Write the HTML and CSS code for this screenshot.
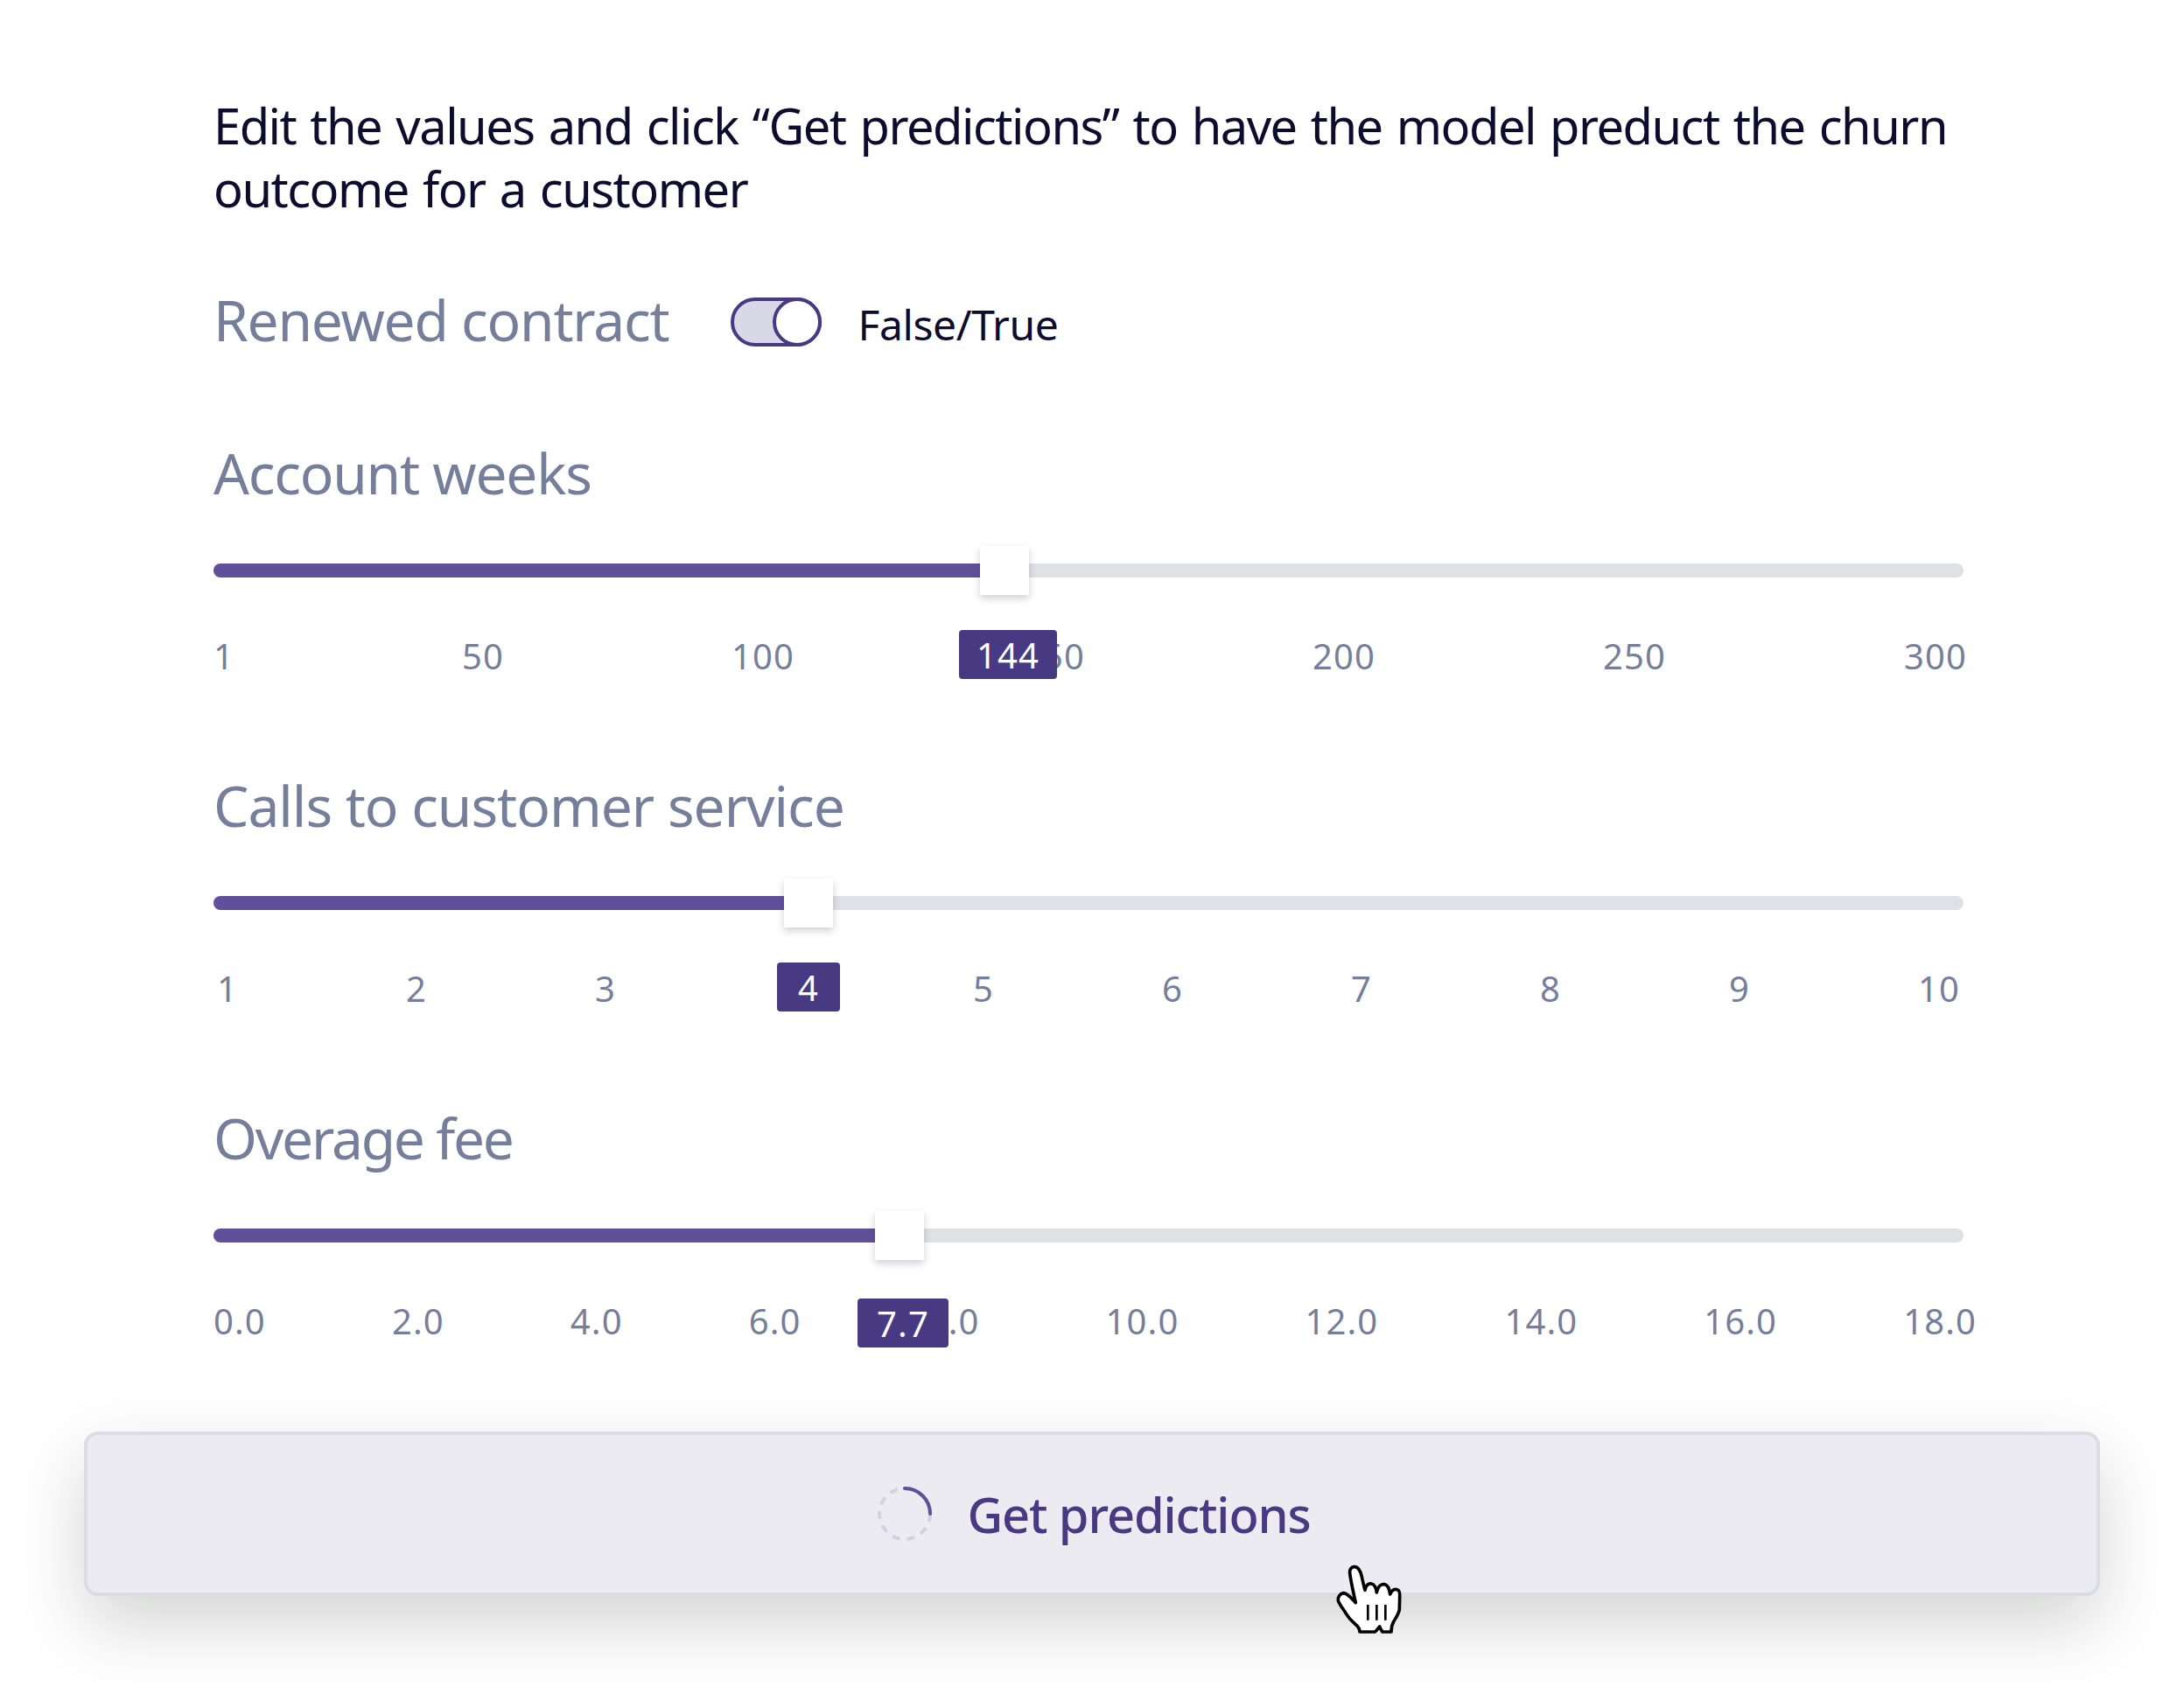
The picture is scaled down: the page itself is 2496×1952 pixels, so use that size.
FILE: index.html
```html
<!DOCTYPE html>
<html lang="en">
<head>
<meta charset="utf-8">
<title>Get predictions</title>
<link rel="stylesheet" href="styles.css">
</head>
<body>
<main class="page">
  <div class="form">
    <p class="intro">Edit the values and click “Get predictions” to have the model preduct the churn<br>outcome for a customer</p>

    <div class="toggle-field">
      <span class="label">Renewed contract</span>
      <span class="toggle"><span class="toggle-knob"></span></span>
      <span class="toggle-text">False/True</span>
    </div>

    <section class="field field-first">
      <h2 class="label">Account weeks</h2>
      <div class="slider">
        <div class="track"></div>
        <div class="fill" style="width:43.8%"></div>
        <div class="thumb" style="left:43.8%"></div>
      </div>
      <div class="ticks ticks-weeks">
        <span>1</span><span>50</span><span>100</span><span>150</span><span>200</span><span>250</span><span class="tick-last">300</span>
        <span class="badge badge-wide" style="left:852px">144</span>
      </div>
    </section>

    <section class="field">
      <h2 class="label label-loose">Calls to customer service</h2>
      <div class="slider">
        <div class="track"></div>
        <div class="fill" style="width:32.6%"></div>
        <div class="thumb" style="left:32.6%"></div>
      </div>
      <div class="ticks ticks-calls">
        <span>1</span><span>2</span><span>3</span><span>4</span><span>5</span><span>6</span><span>7</span><span>8</span><span>9</span><span>10</span>
        <span class="badge badge-narrow" style="left:644px">4</span>
      </div>
    </section>

    <section class="field">
      <h2 class="label label-tight">Overage fee</h2>
      <div class="slider">
        <div class="track"></div>
        <div class="fill" style="width:37.8%"></div>
        <div class="thumb" style="left:37.8%"></div>
      </div>
      <div class="ticks ticks-fee">
        <span>0.0</span><span>2.0</span><span>4.0</span><span>6.0</span><span>8.0</span><span>10.0</span><span>12.0</span><span>14.0</span><span>16.0</span><span>18.0</span>
        <span class="badge badge-fee" style="left:736px">7.7</span>
      </div>
    </section>
  </div>

  <button class="predict" type="button">
    <svg class="spinner" viewBox="0 0 62 62" aria-hidden="true">
      <circle class="spinner-ring" cx="31" cy="31" r="29"/>
      <path class="spinner-arc" d="M31 2A29 29 0 0 1 60 31"/>
    </svg>
    <span>Get predictions</span>
  </button>

  <svg class="cursor" viewBox="0 0 480 420" aria-hidden="true">
    <path class="cursor-hand" d="M208 215C200 180 192 145 188 115C186 98 196 90 206 92C218 94 224 106 228 122C232 140 236 158 240 172C242 156 252 148 262 150C272 152 278 164 280 180C284 160 294 150 306 152C318 154 324 170 326 186C332 172 342 168 350 170C358 172 360 182 359 195L358 238C356 254 346 266 338 280C331 292 330 302 330 315L300 315C296 310 292 302 290 297C284 304 280 311 274 315L222 315C222 304 216 296 206 288C194 278 184 268 176 254C168 240 154 224 148 208C146 196 154 184 166 182C180 182 196 202 208 215Z"/>
    <path class="cursor-lines" d="M250 222V275M280 222V275M310 222V275"/>
  </svg>
</main>
</body>
</html>
```
FILE: styles.css
```css
* { box-sizing: border-box; }

html, body { margin: 0; padding: 0; background: #fff; }

body {
  font-family: "Noto Sans", "Open Sans", sans-serif;
  color: #0c0c2e;
}

.page {
  position: relative;
  width: 2496px;
  height: 1952px;
  padding-top: 107px;
  overflow: hidden;
}

.form { padding-left: 244px; width: 2300px; }

.intro {
  margin: 0;
  font-size: 56px;
  line-height: 72px;
  white-space: nowrap;
  letter-spacing: -1.5px;
  word-spacing: 3px;
}

.label {
  margin: 0;
  font-size: 64px;
  font-weight: 400;
  line-height: 80px;
  color: #757f9b;
  letter-spacing: -1.2px;
}

.label-loose { letter-spacing: -1px; }
.label-tight { letter-spacing: -2.2px; }

.toggle-field {
  display: flex;
  align-items: center;
  margin-top: 75px;
  height: 80px;
}

.toggle {
  display: flex;
  justify-content: flex-end;
  width: 104px;
  height: 56px;
  margin: 4px 0 0 71px;
  border: 4px solid #483a82;
  border-radius: 28px;
  background: #d9d8e6;
}

.toggle-knob {
  width: 56px;
  height: 56px;
  margin: -4px -4px 0 0;
  border: 4px solid #483a82;
  border-radius: 50%;
  background: #fff;
}

.toggle-text {
  margin: 8px 0 0 41px;
  font-size: 48px;
  letter-spacing: -.4px;
}

.field { margin-top: 103px; }
.field-first { margin-top: 95px; }

.slider {
  position: relative;
  width: 2000px;
  height: 56px;
  margin-top: 43px;
}

.track, .fill {
  position: absolute;
  top: 20px;
  left: 0;
  height: 16px;
  border-radius: 8px;
}

.track { width: 100%; background: #dee1e5; }
.fill { background: #5f509a; border-radius: 8px 0 0 8px; }

.thumb {
  position: absolute;
  top: 0;
  width: 56px;
  height: 56px;
  background: #fff;
  box-shadow: 0 4px 8px rgba(40, 45, 70, .22);
}

.ticks {
  position: relative;
  display: flex;
  justify-content: space-between;
  height: 56px;
  margin-top: 42px;
  font-size: 40px;
  line-height: 56px;
  color: #757f9b;
  letter-spacing: 1.1px;
}

.ticks-weeks { width: 2004px; }
.tick-last { margin-left: 12px; }
.ticks-calls { width: 2000px; padding: 0 4px; }
.ticks-fee { width: 2015px; }

.badge {
  position: absolute;
  top: -2px;
  height: 56px;
  border-radius: 4px;
  background: #483a82;
  color: #fff;
  line-height: 58px;
  text-align: center;
}

.badge-narrow { width: 72px; }
.badge-wide { width: 112px; }
.badge-fee { top: 2px; width: 104px; }

.predict {
  display: flex;
  align-items: center;
  justify-content: center;
  width: 2304px;
  height: 188px;
  margin: 98px 0 0 96px;
  padding: 0 0 0 5px;
  border: 4px solid #dcdce8;
  border-radius: 16px;
  background: #ecebf1;
  box-shadow: 0 32px 80px rgba(30, 40, 30, .2);
  font-family: inherit;
  font-size: 56px;
  font-weight: 500;
  line-height: 72px;
  color: #483a82;
  letter-spacing: -1.1px;
}

.spinner {
  width: 62px;
  height: 62px;
  margin-right: 40px;
  fill: none;
  stroke-width: 4;
}

.spinner-ring { stroke: #d3d0e4; stroke-dasharray: 9 8; }
.spinner-arc { stroke: #5f509a; stroke-linecap: round; }

.cursor {
  position: absolute;
  left: 1480px;
  top: 1760px;
  width: 160px;
  height: 140px;
}

.cursor-hand {
  fill: #fff;
  stroke: #000;
  stroke-width: 11;
  stroke-linejoin: round;
}

.cursor-lines { fill: none; stroke: #000; stroke-width: 8; }
```
